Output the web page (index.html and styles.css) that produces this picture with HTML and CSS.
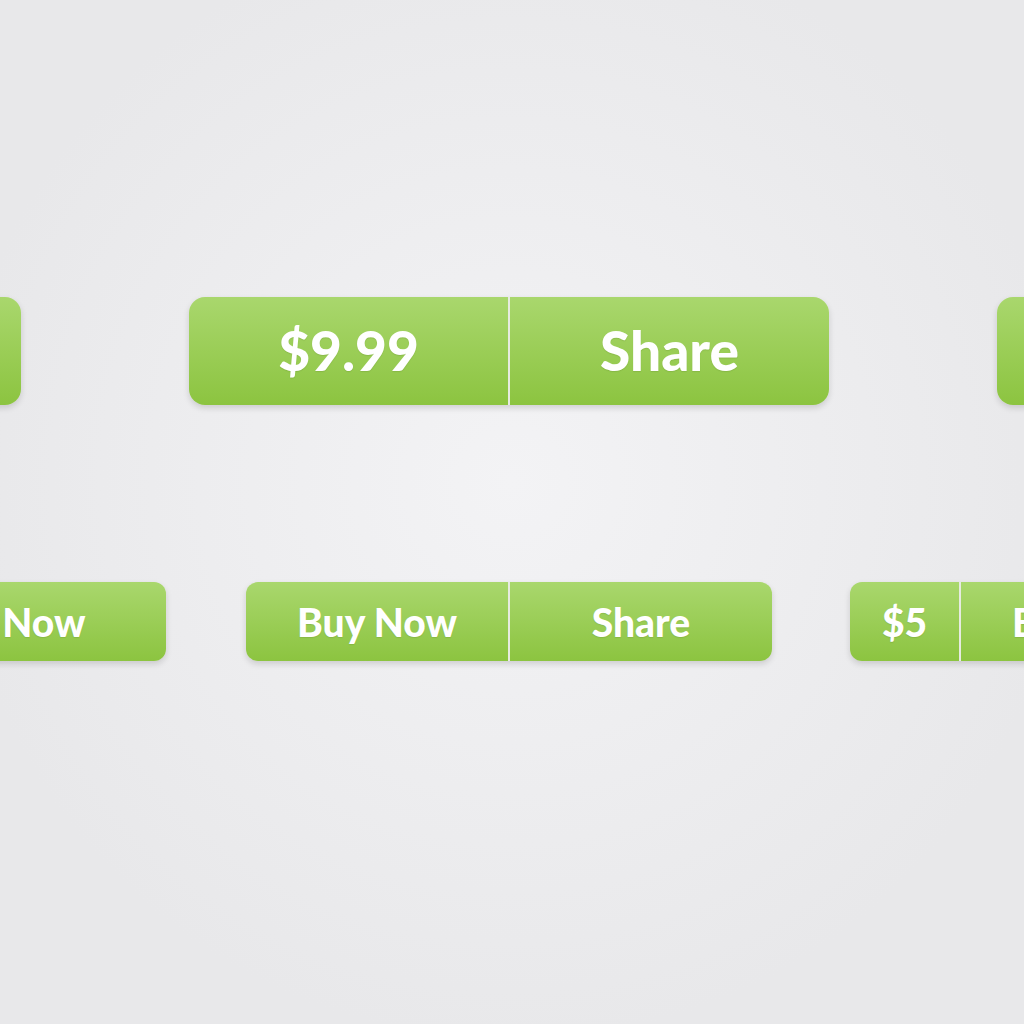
FILE: index.html
```html
<!DOCTYPE html>
<html lang="en">
<head>
    <meta charset="UTF-8">
    <meta name="viewport" content="width=device-width, initial-scale=1.0">
    <title>Split Buttons</title>
    <link rel="stylesheet" href="styles.css">
</head>
<body>
    <div class="stage">
        <!-- large buttons -->
        <div class="row row-large">
            <div class="split-btn large">
                <a class="segment" href="#">$9.99</a>
                <a class="segment" href="#">Share</a>
            </div>
            <div class="split-btn large">
                <a class="segment" href="#">$9.99</a>
                <a class="segment" href="#">Share</a>
            </div>
            <div class="split-btn large">
                <a class="segment" href="#">$9.99</a>
                <a class="segment" href="#">Share</a>
            </div>
        </div>

        <!-- small buttons -->
        <div class="row row-small">
            <div class="slot slot-left">
                <div class="split-btn small">
                    <a class="segment price" href="#">$5</a>
                    <a class="segment wide" href="#">Buy Now</a>
                </div>
            </div>
            <div class="split-btn small">
                <a class="segment half" href="#">Buy Now</a>
                <a class="segment half" href="#">Share</a>
            </div>
            <div class="slot slot-right">
                <div class="split-btn small">
                    <a class="segment price" href="#">$5</a>
                    <a class="segment half" href="#">Buy Now</a>
                </div>
            </div>
        </div>
    </div>
</body>
</html>
```

FILE: styles.css
```css
html, body {
    margin: 0;
    height: 100%;
}

body {
    font-family: 'Lato', 'Liberation Sans', sans-serif;
    background: radial-gradient(circle at 50% 47%, #f3f3f5 0%, #eeeef0 35%, #e8e8ea 75%);
    overflow: hidden;
}

.stage {
    display: flex;
    flex-direction: column;
    gap: 177px;
    padding-top: 297px;
}

.row {
    display: flex;
    justify-content: center;
    padding-right: 6px;
}

.row-large {
    gap: 168px;
}

.row-small {
    gap: 80px;
}

.slot {
    flex: 1;
    min-width: 0;
    display: flex;
}

.slot-left {
    justify-content: flex-end;
}

.slot-right {
    justify-content: flex-start;
}

.slot-right .split-btn {
    margin-left: -2px;
}

.split-btn {
    display: flex;
    flex-shrink: 0;
    gap: 2px;
    border-radius: 16px;
    box-shadow: 0 3px 6px rgba(0,0,0,0.14);
    background: #e6ebe0;
}

.segment {
    display: flex;
    align-items: center;
    justify-content: center;
    color: white;
    font-weight: 900;
    text-decoration: none;
    background: linear-gradient(to bottom, #a9d76d, #8cc440);
    text-shadow: 0 1px 1px rgba(60,90,20,0.15);
}

.segment:first-child {
    border-radius: 16px 0 0 16px;
}

.segment:last-child {
    border-radius: 0 16px 16px 0;
}

.large .segment {
    box-sizing: border-box;
    width: 319px;
    height: 108px;
    padding-bottom: 3px;
    font-size: 55px;
}

.small {
    border-radius: 12px;
}

.small .segment {
    height: 79px;
    font-size: 39px;
}

.small .segment:first-child {
    border-radius: 12px 0 0 12px;
}

.small .segment:last-child {
    border-radius: 0 12px 12px 0;
}

.small .half {
    width: 262px;
}

.small .price {
    width: 109px;
}

.small .wide {
    width: 321px;
}
```
